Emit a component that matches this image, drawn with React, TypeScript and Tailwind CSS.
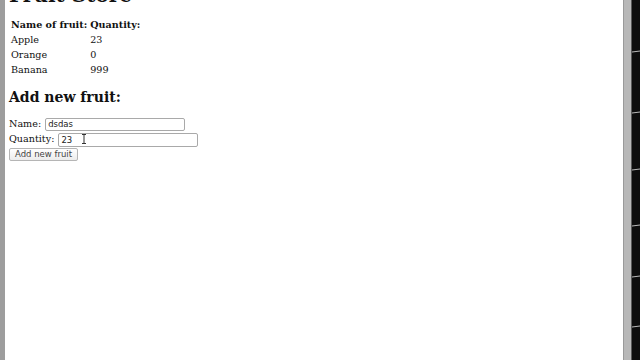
import React from 'react';

export default function App() {
  const fruits = [
    { name: 'Apple', qty: 23 },
    { name: 'Orange', qty: 0 },
    { name: 'Banana', qty: 999 },
  ];

  return (
    <div className="flex h-[360px] w-[640px] overflow-hidden bg-white">
      {/* left window edge */}
      <div className="w-[5px] shrink-0 bg-[#9d9d9d]" />

      {/* page */}
      <main className="relative flex-1 overflow-hidden pl-[4px] font-['DejaVu_Serif',serif] text-[9.6px] text-[#111]">
        <h1 className="-mt-[16px] text-[20px] font-bold leading-[22px]">Fruit Store</h1>

        <table className="mt-[10px] border-separate border-spacing-x-[2px] border-spacing-y-[3px]">
          <thead>
            <tr>
              <th className="h-[12px] pr-[1px] text-left font-bold leading-[12px]">Name of fruit:</th>
              <th className="text-left font-bold leading-[12px]">Quantity:</th>
            </tr>
          </thead>
          <tbody>
            {fruits.map((f) => (
              <tr key={f.name}>
                <td className="h-[12px] leading-[12px]">{f.name}</td>
                <td className="leading-[12px]">{f.qty}</td>
              </tr>
            ))}
          </tbody>
        </table>

        <h2 className="mt-[8px] text-[14px] font-bold leading-[20px]">Add new fruit:</h2>

        <form className="mt-[10px] flex flex-col items-start">
          <label className="flex items-center gap-[4px]">
            Name:
            <input
              defaultValue="dsdas"
              className="h-[13px] w-[140px] rounded-[2px] border border-[#a9a9a9] px-[2px] font-['DejaVu_Sans',sans-serif] text-[8.5px] text-[#222]"
            />
          </label>
          <label className="relative mt-[1px] flex items-center gap-[4px]">
            Quantity:
            <input
              defaultValue="23"
              className="h-[14px] w-[140px] rounded-[2px] border border-[#a9a9a9] px-[2px] font-['DejaVu_Sans',sans-serif] text-[8.5px] text-[#222]"
            />
            <svg className="absolute left-[72px] top-[2px]" width="6" height="10" viewBox="0 0 6 10">
              <path d="M1 0.5h4M3 0.5v9M1 9.5h4" stroke="#333" strokeWidth="1" fill="none" />
            </svg>
          </label>
          <button
            type="button"
            className="mt-[1px] h-[13px] rounded-[2px] border border-[#b5b5b5] bg-gradient-to-b from-white to-[#ececec] px-[5px] font-['DejaVu_Sans',sans-serif] text-[8.5px] leading-[11px] text-[#444]"
          >
            Add new fruit
          </button>
        </form>
      </main>

      {/* scrollbar */}
      <div className="w-[8px] shrink-0 border-l border-[#9a9a9a] bg-[#b8b8b8]" />

      {/* dark background strip */}
      <svg className="shrink-0" width="9" height="360" viewBox="0 0 9 360">
        <rect width="9" height="360" fill="#0e0e0e" />
        <rect x="0" width="1" height="360" fill="#5a5a5a" />
        {[52, 113, 170, 226, 277, 327].map((y) => (
          <line key={y} x1="1" y1={y} x2="9" y2={y - 1} stroke="#bbbbbb" strokeWidth="1" />
        ))}
      </svg>
    </div>
  );
}
